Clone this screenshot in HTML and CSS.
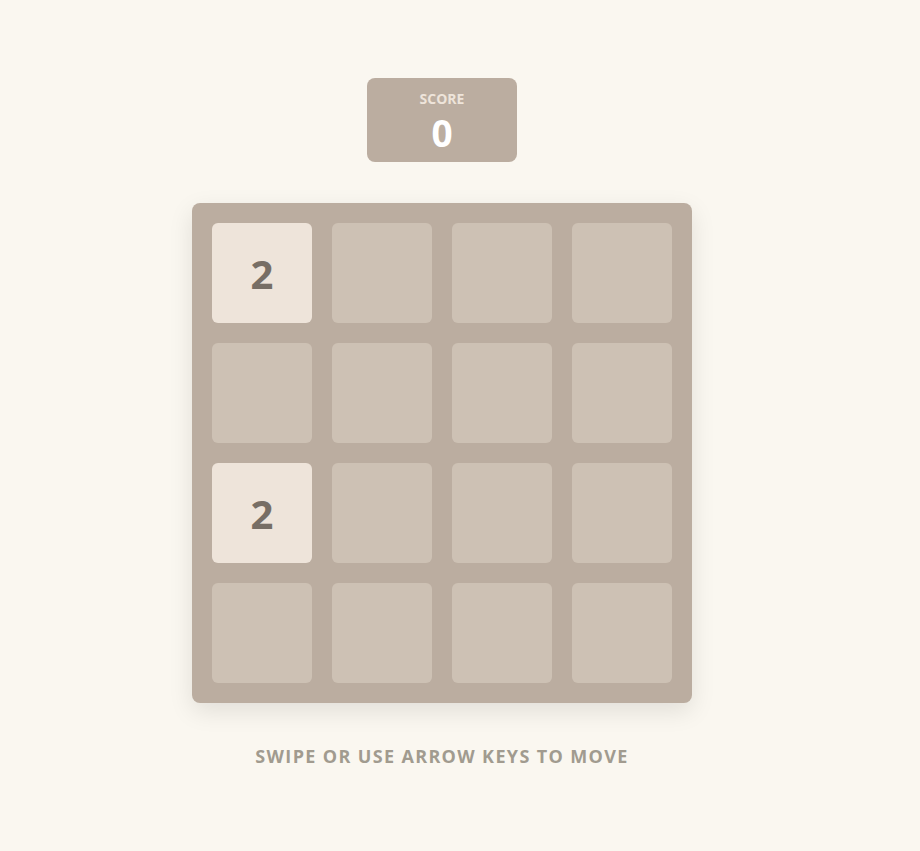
FILE: index.html
```html
<!DOCTYPE html>
<html>
<head>
<meta charset="utf-8">
<link rel="stylesheet" href="styles.css">
</head>
<body>
<div class="game">
  <div class="score-box">
    <div class="score-label">SCORE</div>
    <div class="score-value">0</div>
  </div>
  <div class="board">
    <div class="cell tile-2">2</div><div class="cell"></div><div class="cell"></div><div class="cell"></div>
    <div class="cell"></div><div class="cell"></div><div class="cell"></div><div class="cell"></div>
    <div class="cell tile-2">2</div><div class="cell"></div><div class="cell"></div><div class="cell"></div>
    <div class="cell"></div><div class="cell"></div><div class="cell"></div><div class="cell"></div>
  </div>
  <div class="hint">SWIPE OR USE ARROW KEYS TO MOVE</div>
</div>
</body>
</html>
```
FILE: styles.css
```css
html, body {
  margin: 0;
  padding: 0;
  background: #faf7f0;
  font-family: "Open Sans", "DejaVu Sans", sans-serif;
}
.game {
  display: flex;
  flex-direction: column;
  align-items: center;
  padding-top: 78px;
  padding-right: 36px;
}
.score-box {
  width: 150px;
  height: 84px;
  box-sizing: border-box;
  background: #bbada0;
  border-radius: 8px;
  display: flex;
  flex-direction: column;
  align-items: center;
  padding-top: 11px;
}
.score-label {
  color: #eee4da;
  font-size: 14px;
  font-weight: 700;
  line-height: 20px;
}
.score-value {
  color: #ffffff;
  font-size: 37px;
  font-weight: 700;
  line-height: 44px;
  margin-top: 2px;
}
.board {
  margin-top: 41px;
  width: 500px;
  height: 500px;
  box-sizing: border-box;
  padding: 20px;
  background: #bbada0;
  border-radius: 8px;
  display: grid;
  grid-template-columns: repeat(4, 100px);
  grid-template-rows: repeat(4, 100px);
  gap: 20px;
  box-shadow: 0 8px 24px rgba(0, 0, 0, 0.1);
}
.cell {
  background: #cdc1b4;
  border-radius: 6px;
  display: flex;
  align-items: center;
  justify-content: center;
  font-size: 40px;
  font-weight: 700;
  color: #776e65;
}
.tile-2 {
  background: #eee4da;
}
.hint {
  margin-top: 40px;
  color: #a19b8f;
  font-size: 18px;
  font-weight: 700;
  letter-spacing: 1.35px;
  line-height: 26px;
}
```
